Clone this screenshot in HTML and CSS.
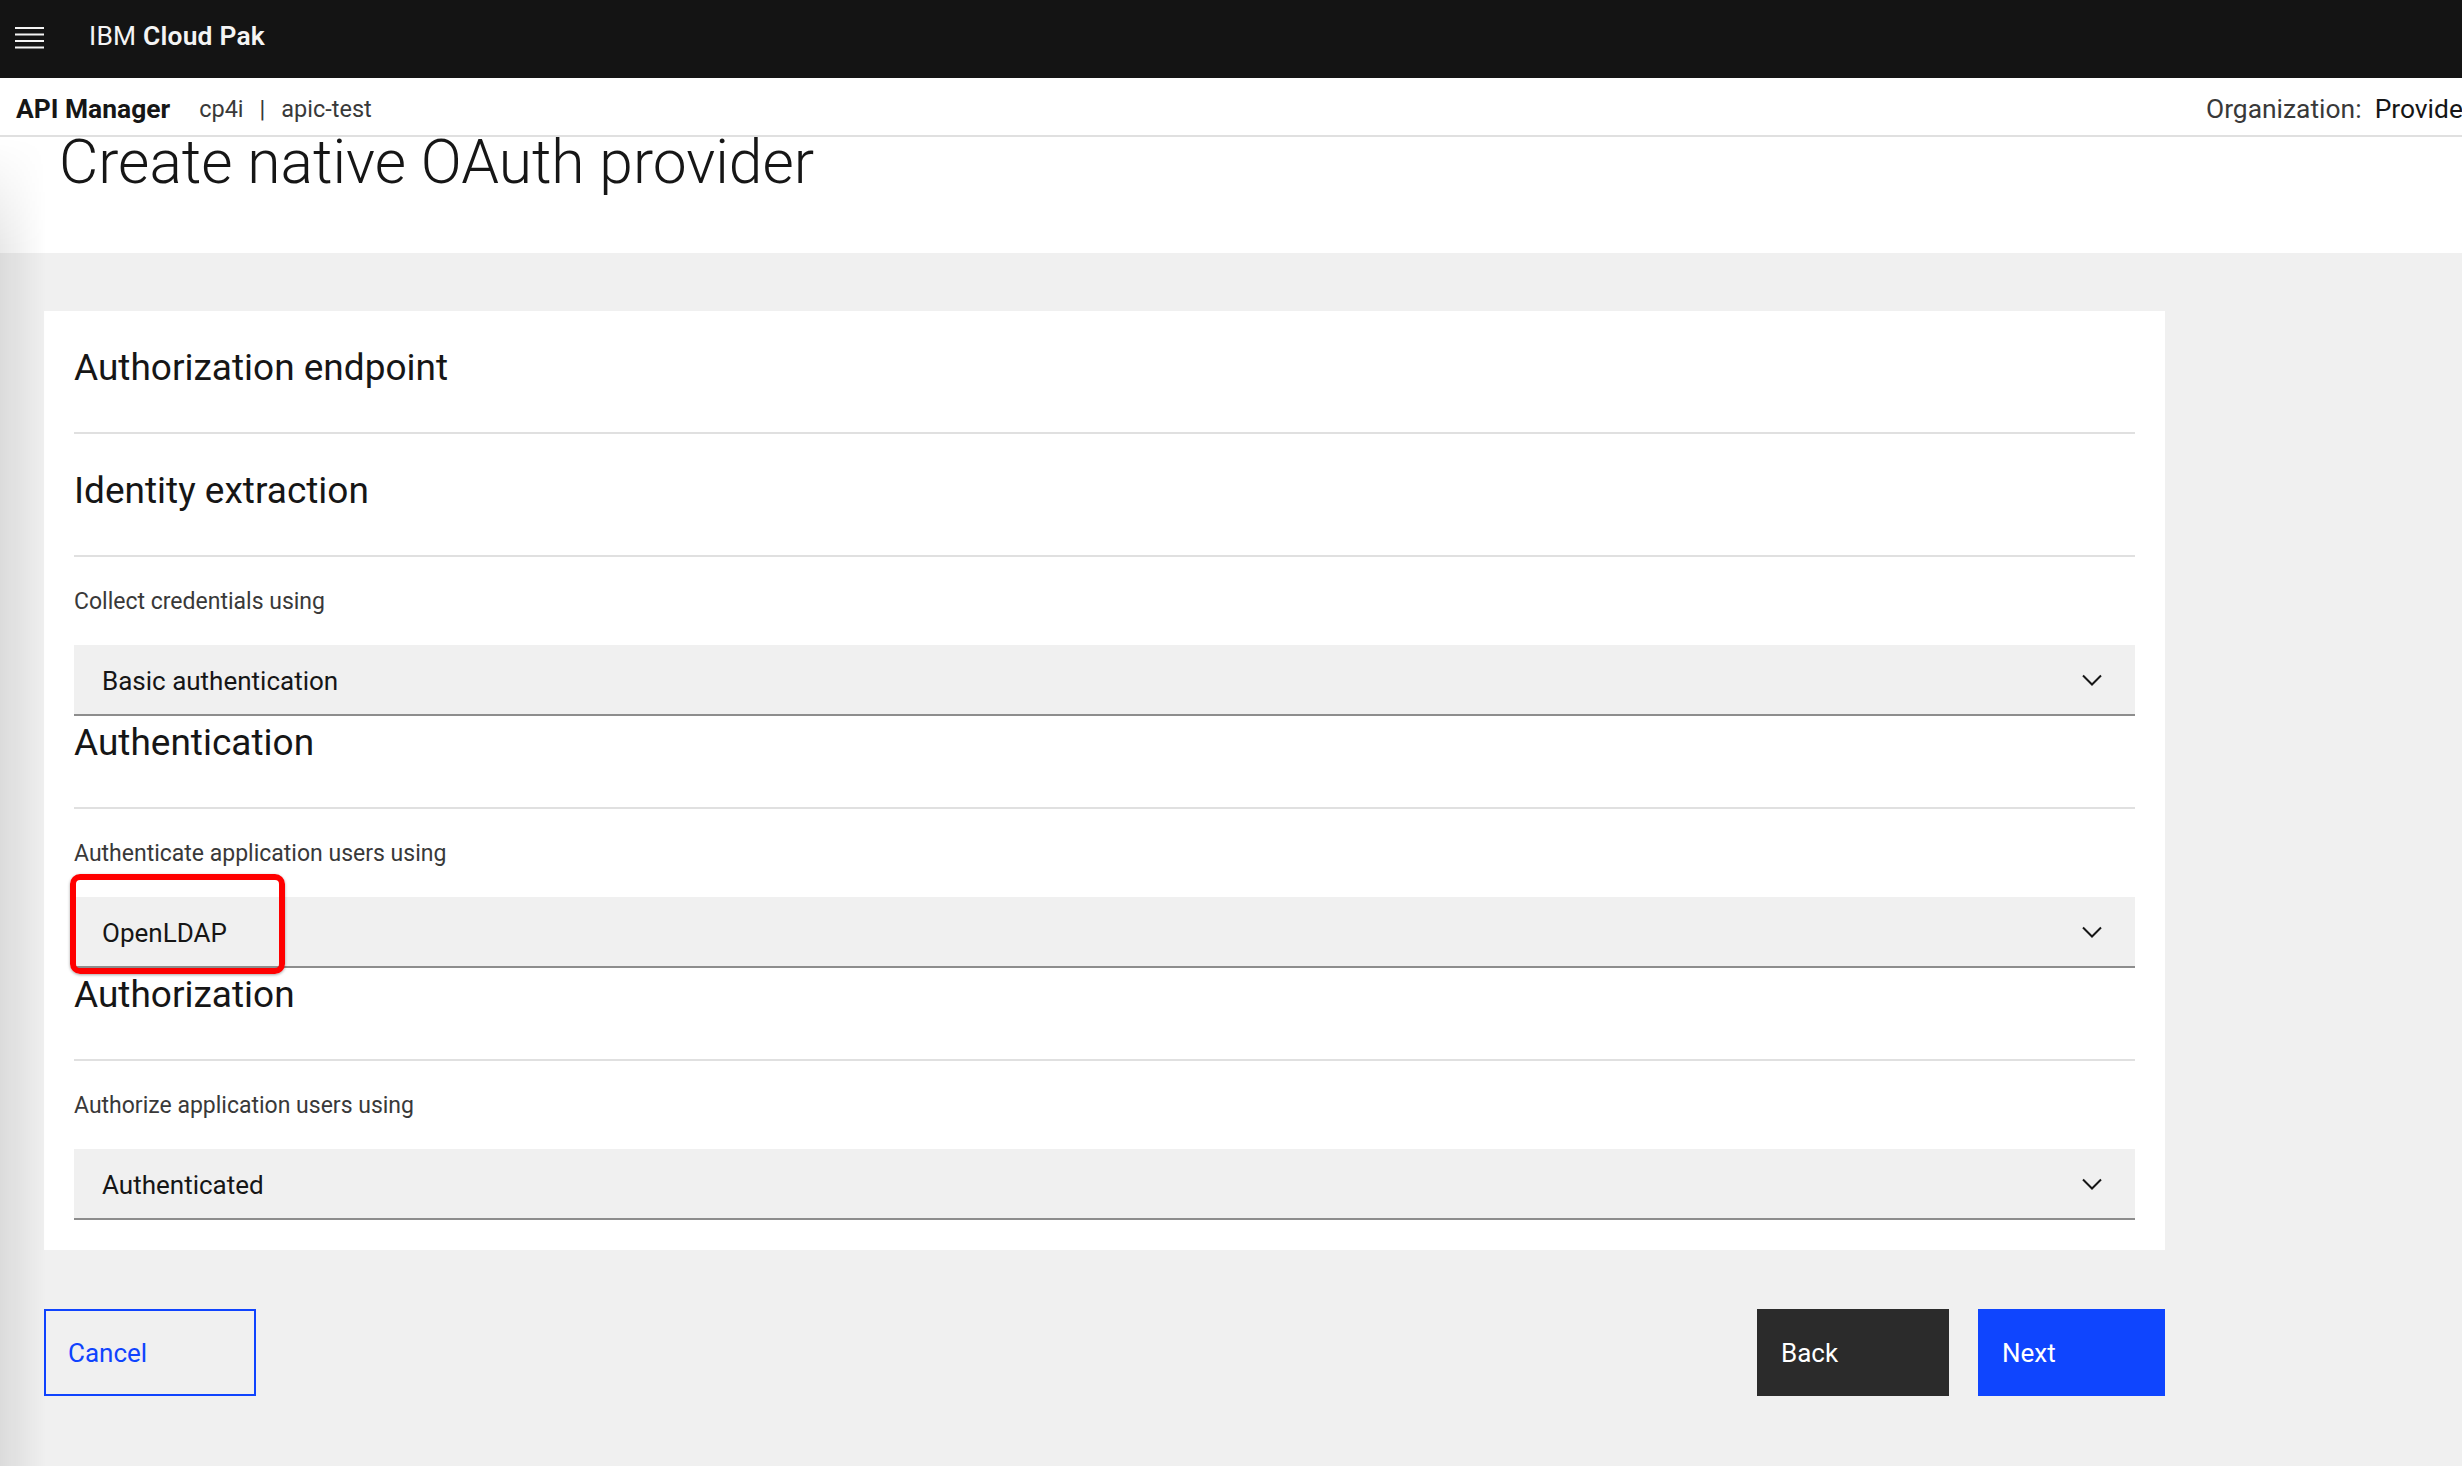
FILE: index.html
```html
<!DOCTYPE html>
<html lang="en">
<head>
<meta charset="utf-8">
<title>Create native OAuth provider</title>
<link rel="stylesheet" href="styles.css">
</head>
<body>
<div class="shell">
  <header class="topbar">
    <svg class="menu-icon" width="30" height="24" viewBox="0 0 30 24" aria-hidden="true">
      <rect x="0" y="2" width="29" height="2" fill="#f4f4f4"/>
      <rect x="0" y="8.5" width="29" height="2" fill="#f4f4f4"/>
      <rect x="0" y="15" width="29" height="2" fill="#f4f4f4"/>
      <rect x="0" y="21.5" width="29" height="2" fill="#f4f4f4"/>
    </svg>
    <span class="brand">IBM <b>Cloud Pak</b></span>
  </header>

  <div class="subbar">
    <div class="sub-left">
      <span class="app-name">API Manager</span>
      <span class="crumb">cp4i</span>
      <span class="crumb-sep">|</span>
      <span class="crumb">apic-test</span>
    </div>
    <div class="org"><span class="org-label">Organization:</span>&nbsp; <span class="org-value">Provider</span></div>
  </div>

  <div class="page-head">
    <h1 class="page-title">Create native OAuth provider</h1>
  </div>

  <main class="content">
    <section class="card">
      <div class="section">
        <h2 class="section-title">Authorization endpoint</h2>
        <div class="section-body"></div>
      </div>

      <div class="section">
        <h2 class="section-title">Identity extraction</h2>
        <div class="section-body">
          <div class="field">
            <label class="field-label">Collect credentials using</label>
            <div class="select">
              <span class="select-value">Basic authentication</span>
              <svg class="chevron" width="20" height="12" viewBox="0 0 20 12" aria-hidden="true"><path d="M1 1.5 L10 10.5 L19 1.5" fill="none" stroke="#161616" stroke-width="2"/></svg>
            </div>
          </div>
        </div>
      </div>

      <div class="section">
        <h2 class="section-title">Authentication</h2>
        <div class="section-body">
          <div class="field">
            <label class="field-label">Authenticate application users using</label>
            <div class="select">
              <span class="select-value">OpenLDAP</span>
              <svg class="chevron" width="20" height="12" viewBox="0 0 20 12" aria-hidden="true"><path d="M1 1.5 L10 10.5 L19 1.5" fill="none" stroke="#161616" stroke-width="2"/></svg>
              <div class="highlight"></div>
            </div>
          </div>
        </div>
      </div>

      <div class="section">
        <h2 class="section-title">Authorization</h2>
        <div class="section-body">
          <div class="field">
            <label class="field-label">Authorize application users using</label>
            <div class="select">
              <span class="select-value">Authenticated</span>
              <svg class="chevron" width="20" height="12" viewBox="0 0 20 12" aria-hidden="true"><path d="M1 1.5 L10 10.5 L19 1.5" fill="none" stroke="#161616" stroke-width="2"/></svg>
            </div>
          </div>
        </div>
      </div>
    </section>

    <div class="actions">
      <button class="btn btn-cancel">Cancel</button>
      <div class="actions-right">
        <button class="btn btn-back">Back</button>
        <button class="btn btn-next">Next</button>
      </div>
    </div>
  </main>

  <div class="edge-shadow"></div>
</div>
</body>
</html>
```

FILE: styles.css
```css
* { box-sizing: border-box; }

html, body {
  margin: 0;
  padding: 0;
  height: 100%;
}

body {
  font-family: Roboto, "Liberation Sans", Arial, sans-serif;
  color: #161616;
  background: #f0f0f0;
  overflow: hidden;
}

.shell {
  position: relative;
  min-height: 100vh;
  display: flex;
  flex-direction: column;
}

/* top black bar */
.topbar {
  height: 78px;
  background: #141414;
  display: flex;
  align-items: center;
  padding-left: 15px;
  flex: none;
}

.menu-icon {
  display: block;
  margin-top: -4px;
}

.brand {
  margin-left: 44px;
  margin-top: -6px;
  font-size: 26.4px;
  color: #f4f4f4;
  letter-spacing: 0.2px;
}

.brand b {
  font-weight: 600;
}

/* white sub bar */
.subbar {
  height: 59px;
  background: #ffffff;
  border-bottom: 2px solid #e0e0e0;
  display: flex;
  align-items: center;
  flex: none;
}

.sub-left {
  flex: 1;
  display: flex;
  align-items: center;
  padding-left: 16px;
  padding-top: 4px;
}

.app-name {
  font-size: 26.4px;
  font-weight: 700;
  color: #161616;
  margin-right: 29px;
}

.crumb {
  font-size: 23.5px;
  color: #393939;
}

.crumb-sep {
  font-size: 23.5px;
  color: #393939;
  margin: 0 16px;
}

.org {
  flex: none;
  width: 256px;
  white-space: nowrap;
  overflow: hidden;
  font-size: 26.4px;
  padding-top: 4px;
}

.org-label { color: #393939; }
.org-value { color: #161616; }

/* page header */
.page-head {
  background: #ffffff;
  height: 116px;
  padding-left: 59px;
  flex: none;
}

.page-title {
  margin: 0;
  font-size: 60.5px;
  font-weight: 300;
  line-height: 48px;
  padding-top: 2px;
  color: #161616;
}

/* main content */
.content {
  flex: 1;
  background: #f0f0f0;
  padding: 58px 0 0 44px;
}

.card {
  width: 2121px;
  background: #ffffff;
  padding: 30px 30px 30px;
}

.section-title {
  margin: 0;
  font-size: 37px;
  font-weight: 400;
  line-height: 49px;
  padding-top: 2px;
  padding-bottom: 40px;
  border-bottom: 2px solid #e0e0e0;
  color: #161616;
}

.section-body {
  padding-top: 30px;
}

.field-label {
  display: block;
  font-size: 23px;
  line-height: 28px;
  padding-top: 1px;
  color: #393939;
  margin-bottom: 29px;
}

.select {
  position: relative;
  height: 71px;
  background: #f0f0f0;
  border-bottom: 2px solid #8d8d8d;
  display: flex;
  align-items: center;
  padding: 0 33px 0 28px;
}

.select-value {
  flex: 1;
  font-size: 26px;
  color: #161616;
  padding-top: 2px;
}

.chevron {
  display: block;
  flex: none;
}

/* red annotation box */
.highlight {
  position: absolute;
  left: -4px;
  top: -23px;
  width: 215px;
  height: 100px;
  border: 6px solid #ff0000;
  border-radius: 10px;
  box-shadow: 0 1px 3px rgba(0, 0, 0, 0.35);
  pointer-events: none;
}

/* buttons */
.actions {
  width: 2121px;
  margin-top: 59px;
  display: flex;
  align-items: flex-start;
}

.actions-right {
  margin-left: auto;
  display: flex;
  gap: 29px;
}

.btn {
  height: 87px;
  font-family: inherit;
  font-size: 26px;
  text-align: left;
  padding: 0 24px;
  border: none;
  border-radius: 0;
  cursor: pointer;
}

.btn-cancel {
  width: 212px;
  background: transparent;
  border: 2px solid #0f43fe;
  color: #0f43fe;
  padding-left: 22px;
}

.btn-back {
  width: 192px;
  background: #2b2b2b;
  color: #ffffff;
}

.btn-next {
  width: 187px;
  background: #0f45fe;
  color: #ffffff;
}

/* side shadow along the left edge */
.edge-shadow {
  position: absolute;
  left: 0;
  top: 137px;
  bottom: 0;
  width: 46px;
  background: linear-gradient(to right, rgba(0, 0, 0, 0.085), rgba(0, 0, 0, 0));
  -webkit-mask-image: linear-gradient(to bottom, rgba(0,0,0,0) 0, rgba(0,0,0,1) 110px);
  mask-image: linear-gradient(to bottom, rgba(0,0,0,0) 0, rgba(0,0,0,1) 110px);
  pointer-events: none;
}
```
